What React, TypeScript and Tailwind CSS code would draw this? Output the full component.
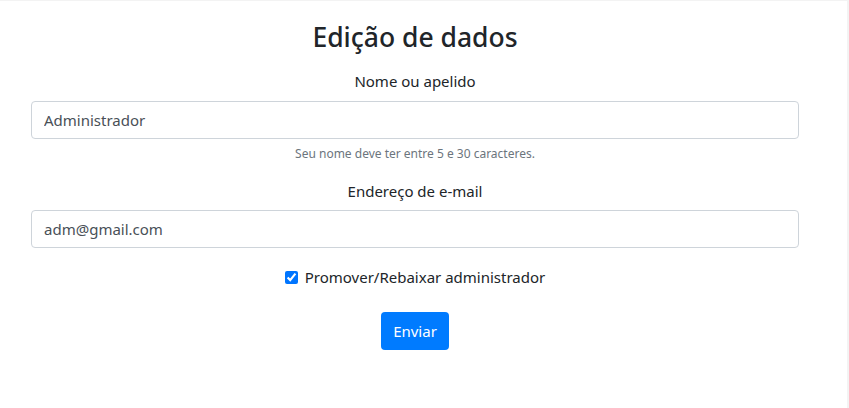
import React from "react";

export default function App() {
  return (
    <div
      className="w-[849px] h-[408px] bg-white text-[#212529] border-t border-r-2 border-[#f3f3f3] overflow-hidden"
      style={{ fontFamily: '"Noto Sans", "Open Sans", sans-serif' }}
    >
      <div className="w-[768px] ml-[31px] flex flex-col items-center">
        <h3 className="mt-[19px] text-[26.5px] leading-[34px] font-medium">Edição de dados</h3>
        <label className="mt-[15px] text-[15px] leading-[24px]">Nome ou apelido</label>
        <input
          readOnly
          value="Administrador"
          className="mt-[8px] w-full h-[38px] px-[12px] border border-[#ced4da] rounded-[4px] text-[15px] text-[#495057] outline-none"
        />
        <small className="mt-[6px] text-[12px] leading-[18px] text-[#6c757d]">
          Seu nome deve ter entre 5 e 30 caracteres.
        </small>
        <label className="mt-[16px] text-[15px] leading-[24px]">Endereço de e-mail</label>
        <input
          readOnly
          value="adm@gmail.com"
          className="mt-[7px] w-full h-[38px] px-[12px] border border-[#ced4da] rounded-[4px] text-[15px] text-[#495057] outline-none"
        />
        <div className="mt-[17px] flex items-center gap-[7px] text-[15px] leading-[24px]">
          <input type="checkbox" readOnly checked className="w-[13px] h-[13px] accent-[#0075ff] m-0" />
          <span>Promover/Rebaixar administrador</span>
        </div>
        <button className="mt-[23px] w-[68px] h-[38px] bg-[#007bff] text-white text-[15px] rounded-[4px]">
          Enviar
        </button>
      </div>
    </div>
  );
}
